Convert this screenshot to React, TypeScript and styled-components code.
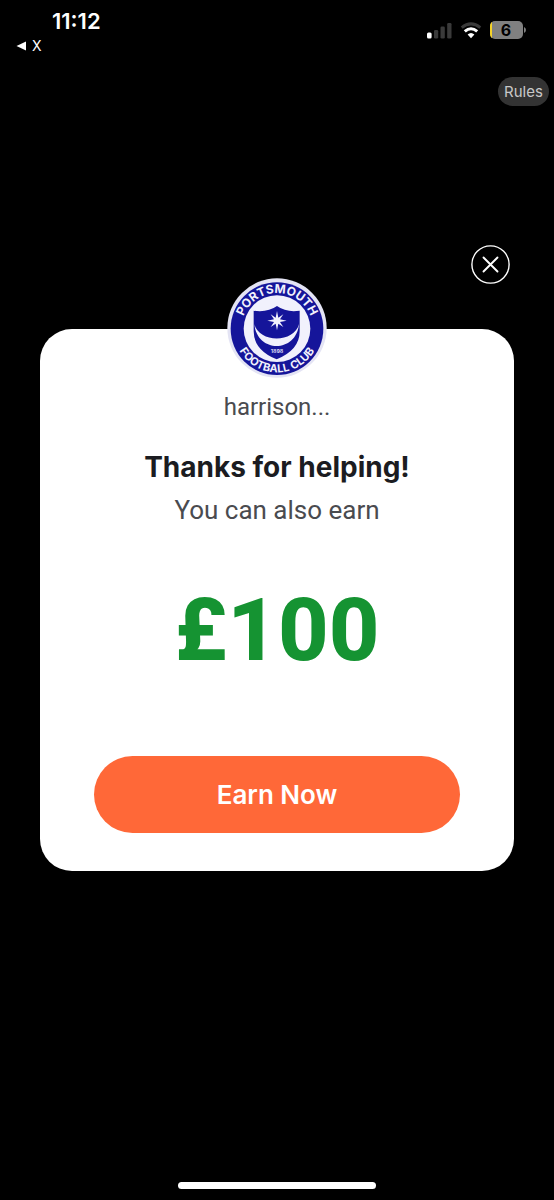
import React from "react";
import styled, { createGlobalStyle } from "styled-components";

const GlobalStyle = createGlobalStyle`
  *, *::before, *::after { box-sizing: border-box; }
  body { margin: 0; background: #000; }
  button { border: 0; padding: 0; font: inherit; cursor: pointer; }
  h1, p { margin: 0; }
`;

const Screen = styled.div`
  display: flex;
  flex-direction: column;
  min-height: 100vh;
  background: #000;
  color: #fff;
  font-family: Inter, "Liberation Sans", sans-serif;
`;

const StatusBar = styled.header`
  display: flex;
  justify-content: space-between;
  align-items: flex-start;
  padding: 8px 28px 0 16px;
`;

const Clock = styled.div`
  padding-left: 36px;
  font-size: 22px;
  line-height: 26px;
  font-weight: 600;
`;

const BackLink = styled.a`
  display: flex;
  align-items: center;
  gap: 6px;
  width: max-content;
  color: #fff;
  font-size: 14px;
  line-height: 24px;
  text-decoration: none;
`;

const StatusIcons = styled.div`
  display: flex;
  align-items: center;
  gap: 8px;
  padding-top: 13px;
`;

const Toolbar = styled.div`
  display: flex;
  justify-content: flex-end;
  padding: 19px 5px 0;
`;

const RulesButton = styled.button`
  height: 29px;
  width: 51px;
  border-radius: 15px;
  background: #333;
  color: #c8c8c8;
  font-size: 15px;
`;

const Dialog = styled.main`
  display: flex;
  flex-direction: column;
  padding: 139px 40px 0;
`;

const CloseButton = styled.button`
  align-self: flex-end;
  display: grid;
  margin-right: 4px;
  border-radius: 50%;
  background: none;
  color: #fff;
`;

const Card = styled.section`
  display: flex;
  flex-direction: column;
  align-items: center;
  margin-top: 45px;
  padding: 0 54px 38px;
  border-radius: 32px;
  background: #fff;
  text-align: center;
`;

const Avatar = styled.svg`
  width: 100px;
  height: 100px;
  margin-top: -51px;
`;

const UserName = styled.p`
  margin-top: 13px;
  color: #4a4b4f;
  font-family: Roboto, sans-serif;
  font-size: 24px;
  line-height: 32px;
`;

const Title = styled.h1`
  margin-top: 26px;
  color: #1b1c21;
  font-size: 28px;
  line-height: 36px;
  font-weight: 700;
`;

const Subtitle = styled.p`
  margin-top: 7px;
  color: #4a4b4f;
  font-family: Roboto, sans-serif;
  font-size: 26px;
  line-height: 36px;
`;

const Amount = styled.p`
  margin-top: 50px;
  color: #159332;
  font-family: Roboto, sans-serif;
  font-size: 88px;
  line-height: 104px;
  font-weight: 800;
`;

const EarnButton = styled.button`
  align-self: stretch;
  height: 77px;
  margin-top: 74px;
  border-radius: 39px;
  background: #ff6838;
  color: #fff;
  font-size: 26px;
  font-weight: 600;
`;

const HomeIndicator = styled.div`
  width: 198px;
  height: 7px;
  margin: auto auto 11px;
  border-radius: 4px;
  background: #fff;
`;

function SignalIcon() {
  return (
    <svg width="25" height="17" viewBox="0 0 25 17" aria-label="Signal">
      <rect x="0" y="10.500" width="4.600" height="6" rx="1.500" fill="#fff" />
      <rect x="7" y="8" width="4.200" height="8.500" rx="1.300" fill="#3a3a3a" />
      <rect x="13.500" y="4.500" width="4.300" height="12" rx="1.300" fill="#3a3a3a" />
      <rect x="20.200" y="1" width="4.300" height="15.500" rx="1.300" fill="#3a3a3a" />
    </svg>
  );
}

function WifiIcon() {
  return (
    <svg width="22" height="17" viewBox="0 0 22 17" fill="none" aria-label="Wi-Fi">
      <path d="M1.700 5.700Q11 -1.900 20.300 5.700" stroke="#3a3a3a" strokeWidth="3" />
      <path d="M4.800 9.400Q11 4 17.200 9.400" stroke="#fff" strokeWidth="3" />
      <path d="M7.600 12.600Q11 9.600 14.400 12.600L11 16.200Z" fill="#fff" />
    </svg>
  );
}

function BatteryIcon() {
  return (
    <svg width="36" height="18" viewBox="0 0 36 18" aria-label="Battery">
      <defs>
        <clipPath id="battery">
          <rect width="33" height="18" rx="5" />
        </clipPath>
      </defs>
      <g clipPath="url(#battery)">
        <rect width="33" height="18" fill="#808080" />
        <rect width="2" height="18" fill="#f5d327" />
      </g>
      <path d="M34 6q2 1 2 3t-2 3z" fill="#808080" />
      <text x="16" y="14.500" textAnchor="middle" fontFamily="Inter" fontSize="16" fontWeight="700" fill="#000">6</text>
    </svg>
  );
}

function ClubCrest() {
  return (
    <Avatar viewBox="0 0 300 300" role="img" aria-label="Portsmouth Football Club">
      <defs>
        <path id="upper" d="M43 152A107 107 0 0 1 257 152" />
        <path id="lower" d="M19 152A131 131 0 0 0 281 152" />
      </defs>
      <circle cx="150" cy="150" r="149" fill="#e4e4f4" />
      <circle cx="150" cy="152" r="139" fill="#15159a" />
      <circle cx="150" cy="152" r="100" fill="#f1f1fc" />
      <g fontFamily="Inter, sans-serif" fontWeight="700" fill="#f1f1fc" textAnchor="middle">
        <text fontSize="36">
          <textPath href="#upper" startOffset="50%">PORTSMOUTH</textPath>
        </text>
        <text fontSize="33">
          <textPath href="#lower" startOffset="50%">FOOTBALL CLUB</textPath>
        </text>
      </g>
      <path
        d="M80 98Q122 104 150 84Q178 104 218 98V160Q218 216 149 244Q80 216 80 160Z"
        fill="#15159a"
      />
      <path d="M82 138C90 226 208 226 216 138C202 196 96 196 82 138Z" fill="#f1f1fc" />
      <path
        d="M150 99L154 119L169 109L159 124L179 128L159 132L169 147L154 137L150 157L146 137L131 147L141 132L121 128L141 124L131 109L146 119Z"
        fill="#f1f1fc"
      />
      <text x="150" y="226" textAnchor="middle" fontFamily="Inter, sans-serif" fontWeight="700" fontSize="16" fill="#d8d8f4">1898</text>
    </Avatar>
  );
}

export default function App() {
  return (
    <Screen>
      <GlobalStyle />
      <StatusBar>
        <div>
          <Clock>11:12</Clock>
          <BackLink href="#back">
            <svg width="10" height="10" viewBox="0 0 10 10" aria-hidden="true">
              <path d="M.5 5L10 .5v9z" fill="#fff" />
            </svg>
            X
          </BackLink>
        </div>
        <StatusIcons>
          <SignalIcon />
          <WifiIcon />
          <BatteryIcon />
        </StatusIcons>
      </StatusBar>
      <Toolbar>
        <RulesButton type="button">Rules</RulesButton>
      </Toolbar>
      <Dialog>
        <CloseButton type="button" aria-label="Close">
          <svg width="39" height="39" viewBox="0 0 39 39" fill="none" stroke="currentColor">
            <circle cx="19.500" cy="19.500" r="18.600" strokeWidth="1.400" />
            <path d="M12.500 12.500l14 14M26.500 12.500l-14 14" strokeWidth="1.900" strokeLinecap="round" />
          </svg>
        </CloseButton>
        <Card>
          <ClubCrest />
          <UserName>harrison...</UserName>
          <Title>Thanks for helping!</Title>
          <Subtitle>You can also earn</Subtitle>
          <Amount>£100</Amount>
          <EarnButton type="button">Earn Now</EarnButton>
        </Card>
      </Dialog>
      <HomeIndicator />
    </Screen>
  );
}
